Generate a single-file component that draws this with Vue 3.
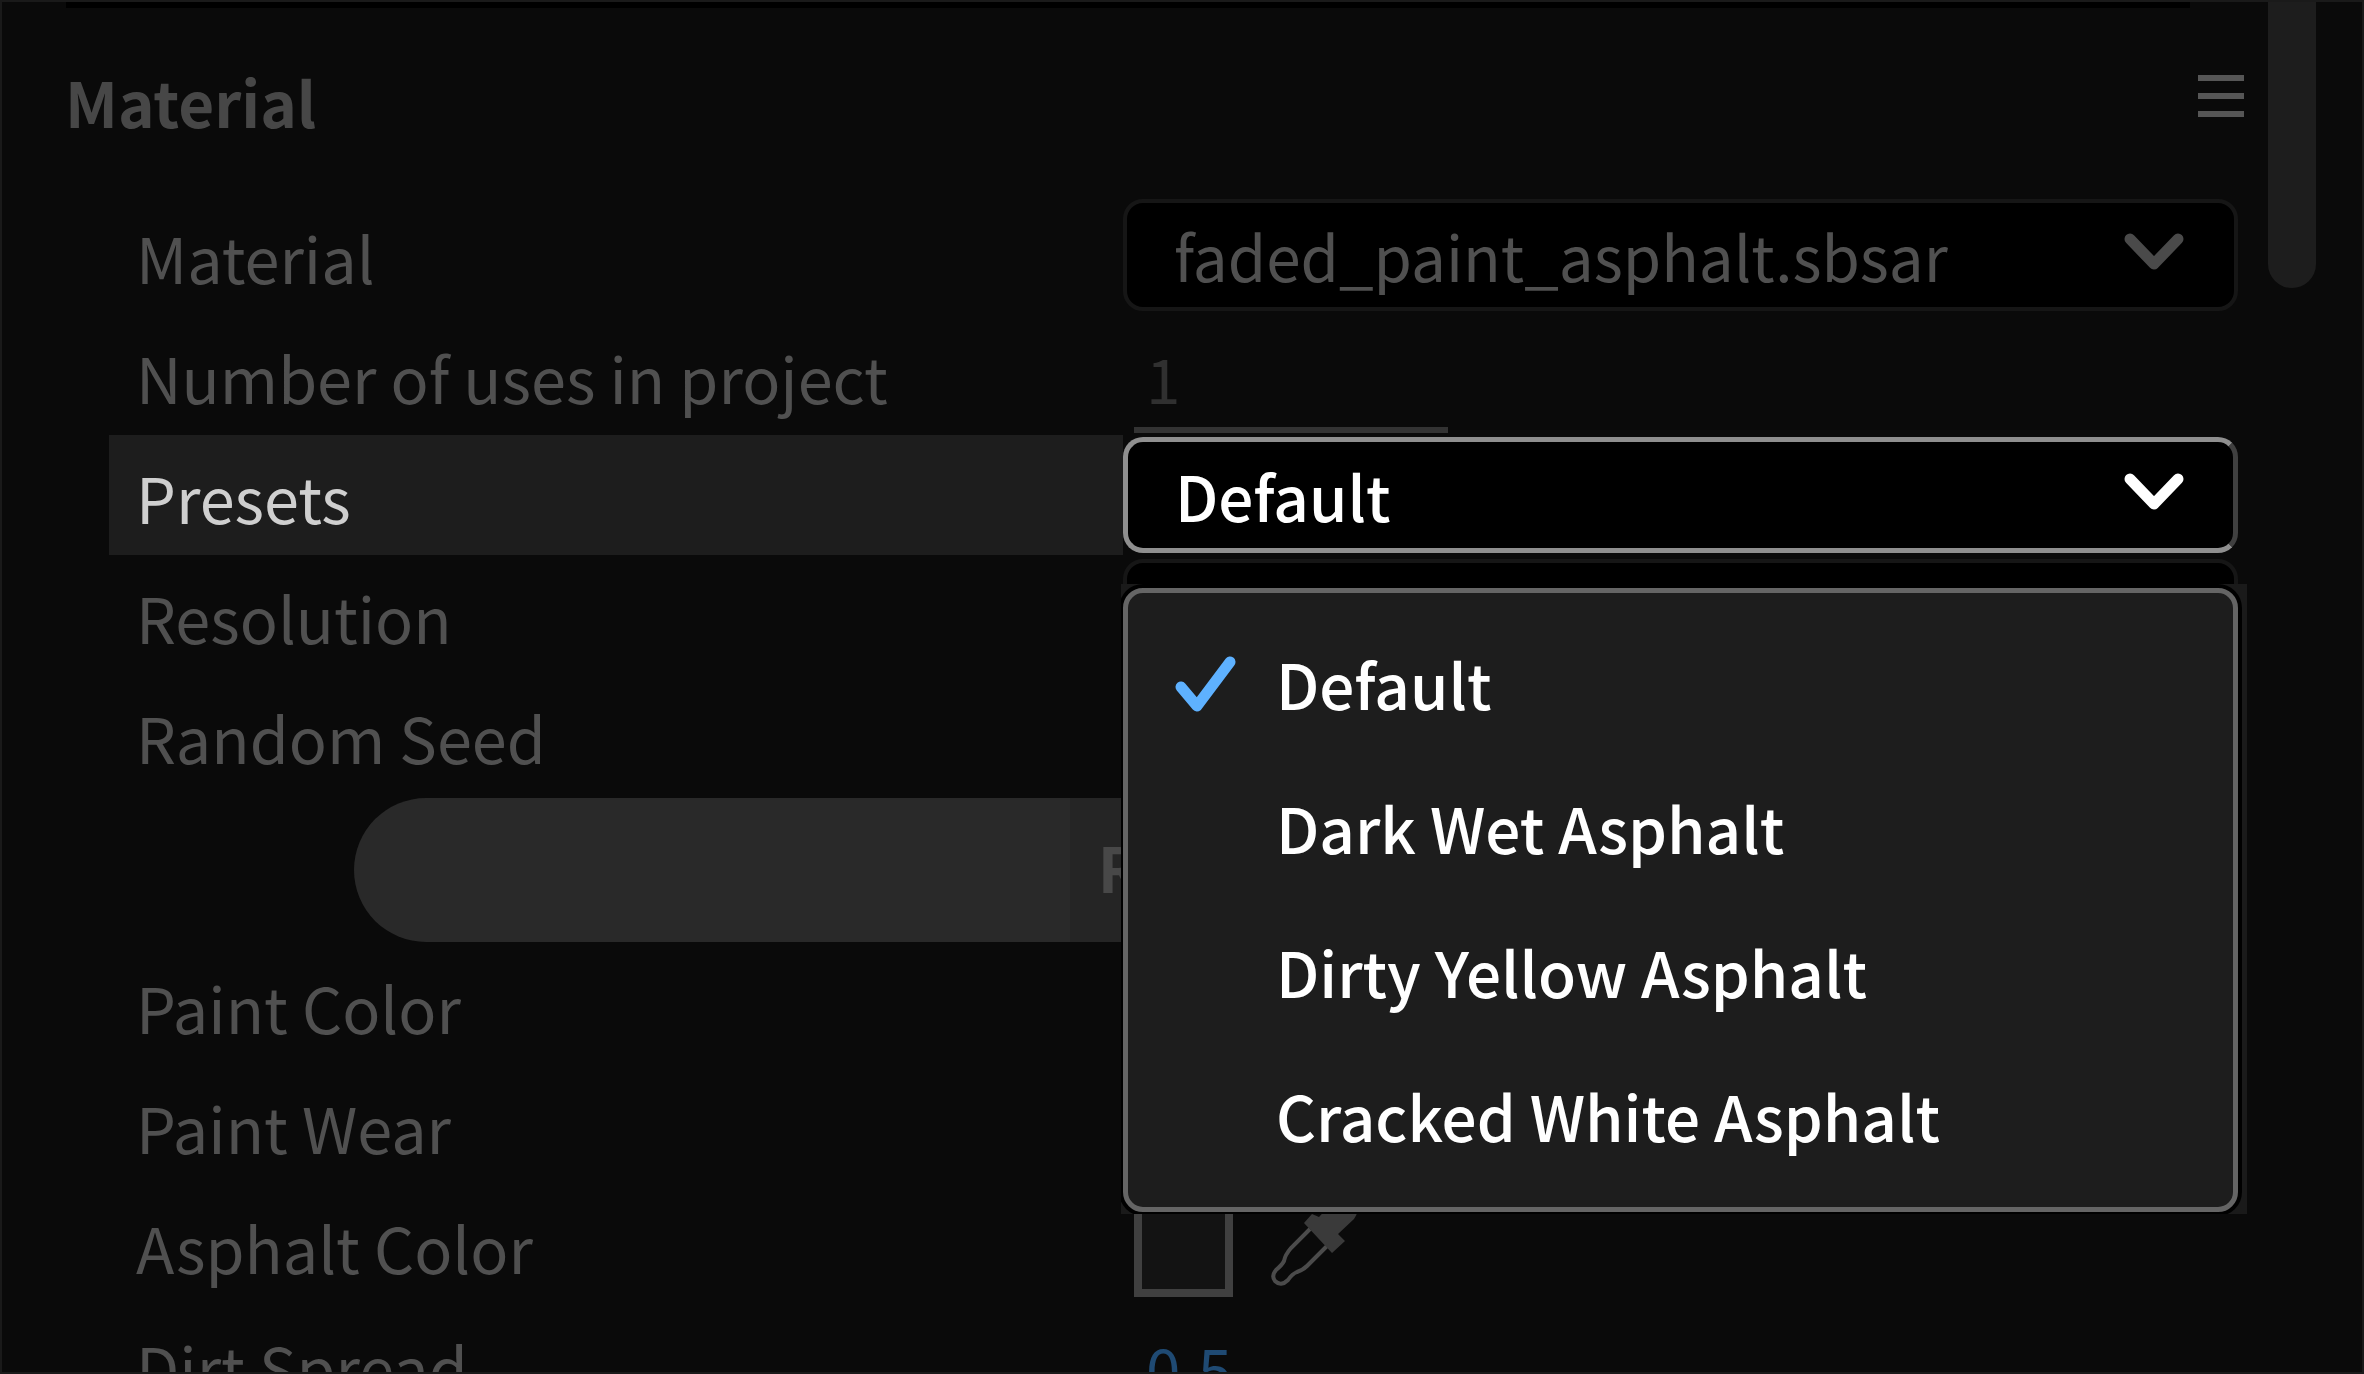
<script setup>
/**
 * MaterialPanel: substance material properties with the preset list open.
 */
import { ref } from 'vue'

const material = ref('faded_paint_asphalt.sbsar')
const uses = ref('1')
const preset = ref('Default')
const dirtSpread = ref('0.5')

const presets = ['Default', 'Dark Wet Asphalt', 'Dirty Yellow Asphalt', 'Cracked White Asphalt']
</script>

<template>
  <div class="panel">
    <main class="content">
      <hr class="rule" />
      <header class="header">
        <h1 class="title">Material</h1>
        <button class="menu-btn" type="button" aria-label="Panel menu">
          <svg width="46" height="42" viewBox="0 0 46 42">
            <path d="M0 3h46M0 21h46M0 39h46" stroke="#565656" stroke-width="6" />
          </svg>
        </button>
      </header>

      <div class="rows">
        <div class="row">
          <label class="label" for="material">Material</label>
          <div class="control">
            <select id="material" v-model="material" class="select">
              <option>faded_paint_asphalt.sbsar</option>
            </select>
            <svg class="chevron" width="60" height="38" viewBox="0 0 60 38">
              <path d="M6 6L30 31L54 6" />
            </svg>
          </div>
        </div>

        <div class="row">
          <label class="label" for="uses">Number of uses in project</label>
          <div class="control">
            <input id="uses" v-model="uses" class="count" type="text" readonly />
          </div>
        </div>

        <div class="row active">
          <label class="label" for="presets">Presets</label>
          <div class="control">
            <select id="presets" v-model="preset" class="select">
              <option v-for="p in presets" :key="p">{{ p }}</option>
            </select>
            <svg class="chevron" width="60" height="38" viewBox="0 0 60 38">
              <path d="M6 6L30 31L54 6" />
            </svg>
            <div class="popup">
              <ul class="options" role="listbox" aria-label="Presets">
                <li v-for="p in presets" :key="p" role="none">
                  <button
                    class="option"
                    type="button"
                    role="option"
                    :aria-selected="p === preset"
                    @click="preset = p"
                  >
                    <span class="tick">
                      <svg v-if="p === preset" width="62" height="58" viewBox="0 0 62 58">
                        <path d="M6 33L22 52L55 8" />
                      </svg>
                    </span>
                    {{ p }}
                  </button>
                </li>
              </ul>
            </div>
          </div>
        </div>

        <div class="row">
          <label class="label" for="resolution">Resolution</label>
          <div class="control">
            <select id="resolution" class="select"></select>
          </div>
        </div>

        <div class="row">
          <span class="label">Random Seed</span>
        </div>

        <div class="button-row">
          <button class="randomize" type="button"><span>Randomize</span></button>
        </div>

        <div class="row">
          <span class="label">Paint Color</span>
        </div>

        <div class="row">
          <span class="label">Paint Wear</span>
        </div>

        <div class="row">
          <span class="label">Asphalt Color</span>
          <div class="control">
            <button class="swatch" type="button" aria-label="Asphalt color"></button>
            <button class="dropper" type="button" aria-label="Pick color">
              <svg width="92" height="92" viewBox="0 0 92 92">
                <path
                  d="M40 30L21 49Q15 56 14 62Q12 66 6 71Q1 77 5 82Q11 88 18 81Q22 75 27 73Q33 71 37 67L58 46"
                  fill="none"
                  stroke="#4b4b4b"
                  stroke-width="4"
                />
                <path
                  d="M34 24L42 15L49 18L62 4Q72 -6 82 2Q91 11 84 20L68 35L75 42L62 54Z"
                  fill="#3a3a3a"
                />
              </svg>
            </button>
          </div>
        </div>

        <div class="row">
          <label class="label" for="dirt">Dirt Spread</label>
          <div class="control">
            <input id="dirt" v-model="dirtSpread" class="number" type="text" />
          </div>
        </div>
      </div>
    </main>

    <div class="scrollbar"><div class="thumb"></div></div>
  </div>
</template>

<style>
body { background: #0a0a0a; }
</style>

<style scoped>
.panel {
  box-sizing: border-box;
  display: flex;
  height: 100vh;
  overflow: hidden;
  border: 2px solid #1a1a1a;
  background: #0a0a0a;
  color: #505050;
  font-family: "Noto Sans CJK SC", "Noto Sans", sans-serif;
  font-size: 62px;
  line-height: 80px;
}
button, input, select {
  box-sizing: border-box;
  margin: 0;
  padding: 0;
  border: 0;
  background: none;
  color: inherit;
  font: inherit;
}
svg { display: block; }
.content { flex: 1; min-width: 0; padding-right: 30px; }

.rule {
  height: 6px;
  margin: 0 48px 0 64px;
  border: 0;
  background: #000;
}
.header {
  display: flex;
  align-items: center;
  justify-content: space-between;
  height: 180px;
  margin-left: 63px;
  padding-bottom: 4px;
  box-sizing: border-box;
}
.title { margin: 0; padding-top: 10px; color: #474747; font-size: 62px; font-weight: 700; }
.menu-btn { margin-right: -6px; }

.rows { margin-left: 107px; padding-top: 7px; }
.row {
  display: grid;
  grid-template-columns: 1014fr 1115fr;
  height: 120px;
}
.label {
  display: flex;
  align-items: center;
  padding: 4px 0 0 27px;
  font-size: 63px;
  white-space: nowrap;
}
.control { position: relative; display: flex; align-items: center; }

.select {
  width: 100%;
  height: 112px;
  padding: 0 120px 0 47px;
  border: 4px solid #161616;
  border-radius: 20px;
  background: #000;
  appearance: none;
}
.chevron {
  position: absolute;
  top: 38px;
  right: 54px;
  fill: none;
  stroke: #4a4a4a;
  stroke-width: 11;
  stroke-linecap: round;
  stroke-linejoin: round;
  pointer-events: none;
}
.count {
  align-self: flex-end;
  width: 314px;
  height: 110px;
  margin: 0 0 2px 11px;
  padding: 4px 0 0 12px;
  border-bottom: 6px solid #333;
  color: #303030;
}
.number { width: 314px; margin-left: 11px; padding: 4px 0 0 12px; color: #1f4a73; }

.active .label { background: #1d1d1d; color: #cfcfcf; }
.active .select {
  height: 116px;
  border: 5px solid #8f8f8f;
  border-right-color: #404040;
  color: #fff;
  font-weight: 500;
}
.active .chevron { stroke: #fff; }

.popup {
  position: absolute;
  top: 149px;
  left: -2px;
  right: -9px;
  z-index: 1;
  overflow: hidden;
  padding: 4px 9px 2px 2px;
  background: #1a1a1a;
}
.options {
  margin: 0;
  padding: 19px 0;
  border: 5px solid #656565;
  border-radius: 20px;
  background: #1d1d1d;
  box-shadow: 0 0 0 4px #000;
  list-style: none;
}
.option {
  display: flex;
  align-items: center;
  width: 100%;
  height: 144px;
  padding: 0 0 2px 47px;
  color: #fff;
  font-weight: 500;
  white-space: nowrap;
}
.tick { width: 101px; }
.tick path {
  fill: none;
  stroke: #5eb1ff;
  stroke-width: 11;
  stroke-linecap: round;
  stroke-linejoin: round;
}

.button-row { display: flex; height: 150px; padding: 3px 54px 0 245px; box-sizing: border-box; }
.randomize {
  flex: 1;
  height: 144px;
  border-radius: 72px;
  background: #292929;
  color: #484848;
  font-weight: 700;
}
.randomize span { display: inline-block; padding: 28px 28px 36px; background: #252525; }

.swatch {
  width: 99px;
  height: 104px;
  margin-left: 11px;
  border: 8px solid #404040;
  background: #131313;
}
.dropper { margin-left: 37px; }

.scrollbar { width: 94px; }
.thumb {
  width: 48px;
  height: 286px;
  border-radius: 0 0 24px 24px;
  background: #1d1d1d;
}
</style>
